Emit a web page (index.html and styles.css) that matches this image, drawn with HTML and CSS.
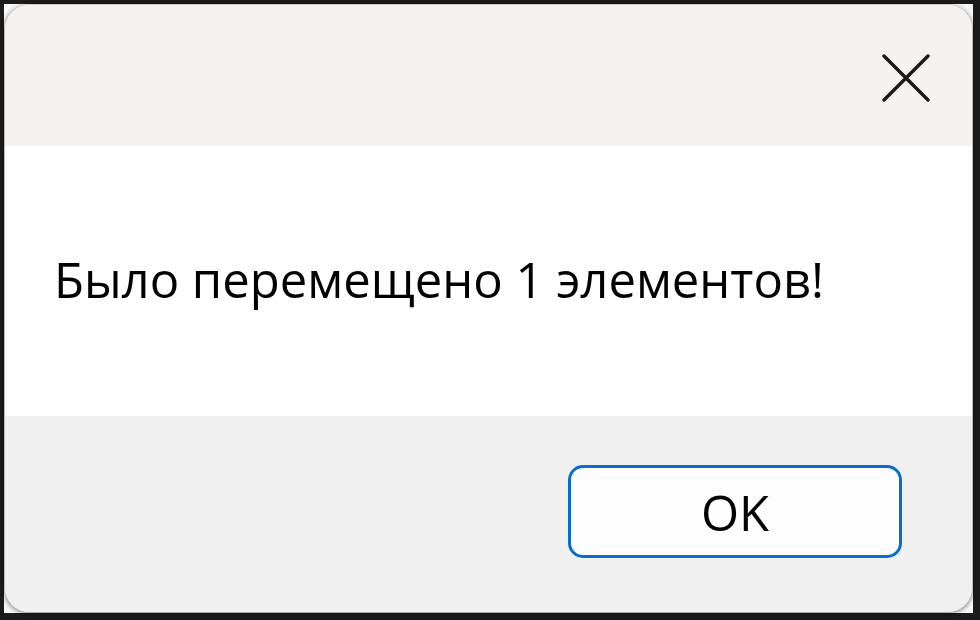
FILE: index.html
```html
<html>

<head>
	<meta charset="utf-8">
	<link rel="stylesheet" href="styles.css">
</head>

<body>

	<div class="screen">
		<div class="frame">
			<div class="window">

				<div class="titlebar">
					<svg class="close" width="48" height="48" viewBox="0 0 48 48">
						<path d="M2 2 L46 46 M46 2 L2 46" stroke="#1a1a1a" stroke-width="3.4" stroke-linecap="round" fill="none"/>
					</svg>
				</div>

				<div class="content">
					<p class="message">Было перемещено 1 элементов!</p>
				</div>

				<div class="footer">
					<button class="btn">OK</button>
				</div>

			</div>
		</div>
	</div>

</body>

</html>
```

FILE: styles.css
```css
* {
	box-sizing: border-box;
}

html,
body {
	margin: 0;
	padding: 0;
	background: #1b1b1b;
}

.screen {
	width: 980px;
	height: 620px;
	padding: 4px 7px 7px 4px;
	background: #1b1b1b;
}

.frame {
	height: 100%;
	background: #f6f6f6;
	border: 1px solid #fafafa;
}

.window {
	height: 100%;
	display: flex;
	flex-direction: column;
	border-radius: 24px;
	overflow: hidden;
	box-shadow: 0 1px 4px 1px rgba(0, 0, 0, .42);
	font-family: "Open Sans", "Noto Sans", sans-serif;
	color: #000;
}

.titlebar {
	height: 141px;
	background: #f4f2f1;
	display: flex;
	justify-content: flex-end;
	align-items: flex-start;
	padding: 49px 42px 0 0;
}

.close {
	display: block;
}

.content {
	height: 270px;
	background: #fff;
	display: flex;
	align-items: center;
	padding-left: 49px;
}

.message {
	margin: 0;
	font-size: 49px;
	line-height: 1;
	padding-bottom: 4px;
}

.footer {
	flex: 1;
	background: #f0f0f0;
	display: flex;
	justify-content: flex-end;
	align-items: flex-start;
	padding: 49px 70px 0 0;
}

.btn {
	width: 334px;
	height: 93px;
	border: 3.5px solid #0a6ccd;
	border-radius: 15px;
	background: #fdfdfd;
	font-family: "Open Sans", "Noto Sans", sans-serif;
	font-size: 49px;
	color: #000;
	padding: 0;
}
```
